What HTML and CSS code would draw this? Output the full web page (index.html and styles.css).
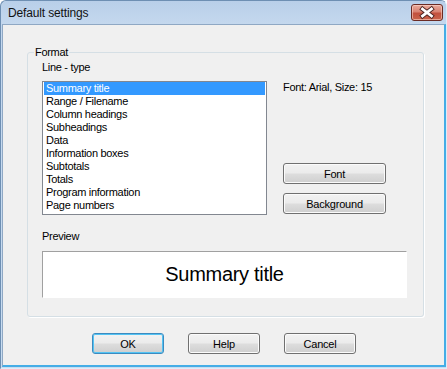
FILE: index.html
```html
<!DOCTYPE html>
<html>
<head>
<meta charset="utf-8">
<title>Default settings</title>
<link rel="stylesheet" href="styles.css">
</head>
<body>
<div class="window">
  <div class="titlebar">
    <span class="title">Default settings</span>
    <div class="close">
      <svg width="30" height="15" viewBox="0 0 30 15">
        <path d="M10.5 4 L19.5 11 M19.5 4 L10.5 11" stroke="#4b2320" stroke-width="4.6" stroke-linecap="square" fill="none"/>
        <path d="M10.5 4 L19.5 11 M19.5 4 L10.5 11" stroke="#ffffff" stroke-width="2.8" stroke-linecap="square" fill="none"/>
      </svg>
    </div>
  </div>
  <div class="client">
    <fieldset class="group">
      <legend class="group-title">Format</legend>
      <div class="group-body">
        <div class="label">Line - type</div>
        <div class="main-row">
          <ul class="listbox">
            <li class="item selected">Summary title</li>
            <li class="item">Range / Filename</li>
            <li class="item">Column headings</li>
            <li class="item">Subheadings</li>
            <li class="item">Data</li>
            <li class="item">Information boxes</li>
            <li class="item">Subtotals</li>
            <li class="item">Totals</li>
            <li class="item">Program information</li>
            <li class="item">Page numbers</li>
          </ul>
          <div class="side">
            <div class="label">Font: Arial, Size: 15</div>
            <div class="side-buttons">
              <button class="btn side-btn">Font</button>
              <button class="btn side-btn">Background</button>
            </div>
          </div>
        </div>
        <div class="label preview-label">Preview</div>
        <div class="preview">Summary title</div>
      </div>
    </fieldset>
    <div class="footer">
      <button class="btn footer-btn default">OK</button>
      <button class="btn footer-btn">Help</button>
      <button class="btn footer-btn">Cancel</button>
    </div>
  </div>
</div>
</body>
</html>
```

FILE: styles.css
```css
html, body {
  margin: 0;
  padding: 0;
  background: #ffffff;
}

body {
  width: 447px;
  height: 369px;
  overflow: hidden;
  font-family: "Liberation Sans", Arial, sans-serif;
  font-size: 11px;
  color: #000;
}

.window {
  box-sizing: border-box;
  width: 447px;
  height: 369px;
  border: 1px solid #6e8fb3;
  border-right-color: #dcedf9;
  border-bottom-color: #dcedf9;
  border-radius: 6px 6px 0 0;
  padding: 0 0 1px 1px;
  background: linear-gradient(#bcd2ea 0px, #c3d7ee 24px, #c8dcf0 100%);
  display: flex;
  flex-direction: column;
}

.titlebar {
  height: 23px;
  display: flex;
  align-items: flex-start;
  justify-content: space-between;
  background: linear-gradient(#b9cfe9, #c4d8ee);
  border-radius: 5px 5px 0 0;
}

.title {
  padding: 1px 0 0 6px;
  line-height: 23px;
  font-size: 12px;
  letter-spacing: -0.15px;
  color: #111;
}

.close {
  box-sizing: border-box;
  width: 32px;
  height: 17px;
  margin: 3px 3px 0 0;
  border: 1px solid #6b2b24;
  border-radius: 3px;
  background: linear-gradient(#e9aa9b 0%, #d88272 45%, #c2503d 55%, #c9644c 100%);
  box-shadow: inset 0 0 0 1px rgba(255, 220, 210, 0.55);
  display: flex;
}

.client {
  flex: 1;
  background: #f0f0f0;
  border: 1px solid #8fa8c4;
  border-right: 2px solid #45ade6;
  border-bottom: 2px solid #45ade6;
}

.group {
  box-sizing: border-box;
  width: 397px;
  min-width: 0;
  margin: 21px 0 0 24px;
  padding: 0;
  border: 1px solid #d5dfe5;
  border-radius: 3px;
  box-shadow: 1px 1px 0 #ffffff;
}

.group-title {
  margin-left: 6px;
  padding: 0 1px;
  line-height: 13px;
  letter-spacing: -0.3px;
}

.group-body {
  padding: 2px 16px 18px 14px;
}

.label {
  line-height: 13px;
  letter-spacing: -0.3px;
}

.main-row {
  display: flex;
  gap: 16px;
  margin-top: 7px;
}

.listbox {
  box-sizing: border-box;
  width: 225px;
  height: 134px;
  margin: 0;
  padding: 0 1px 2px 1px;
  list-style: none;
  background: #ffffff;
  border: 1px solid #828790;
}

.item {
  height: 13px;
  line-height: 13px;
  padding-left: 2px;
  letter-spacing: -0.3px;
  white-space: nowrap;
}

.item.selected {
  background: #3399ff;
  color: #ffffff;
}

.side {
  width: 103px;
  display: flex;
  flex-direction: column;
  justify-content: space-between;
  padding-bottom: 1px;
}

.side-buttons {
  display: flex;
  flex-direction: column;
  gap: 9px;
}

.btn {
  box-sizing: border-box;
  height: 21px;
  margin: 0;
  padding: 0;
  font-family: "Liberation Sans", Arial, sans-serif;
  font-size: 11px;
  letter-spacing: -0.2px;
  color: #000;
  border: 1px solid #707070;
  border-radius: 3px;
  background: linear-gradient(#f2f2f2 0%, #ebebeb 48%, #dddddd 52%, #cfcfcf 100%);
  box-shadow: inset 0 0 0 1px #fbfbfb;
}

.side-btn {
  width: 103px;
}

.preview-label {
  margin-top: 15px;
}

.preview {
  box-sizing: border-box;
  height: 47px;
  margin-top: 8px;
  background: #ffffff;
  border-top: 1px solid #a0a0a0;
  border-left: 1px solid #a0a0a0;
  border-right: 1px solid #ffffff;
  border-bottom: 1px solid #ffffff;
  display: flex;
  align-items: center;
  justify-content: center;
  font-size: 20px;
  letter-spacing: -0.3px;
}

.footer {
  display: flex;
  justify-content: center;
  gap: 24px;
  margin-top: 16px;
  padding-left: 1px;
}

.footer-btn {
  width: 72px;
}

.footer-btn.default {
  border-color: #3c8bc0;
  box-shadow: inset 0 0 0 1px #53c3f3;
}
```
